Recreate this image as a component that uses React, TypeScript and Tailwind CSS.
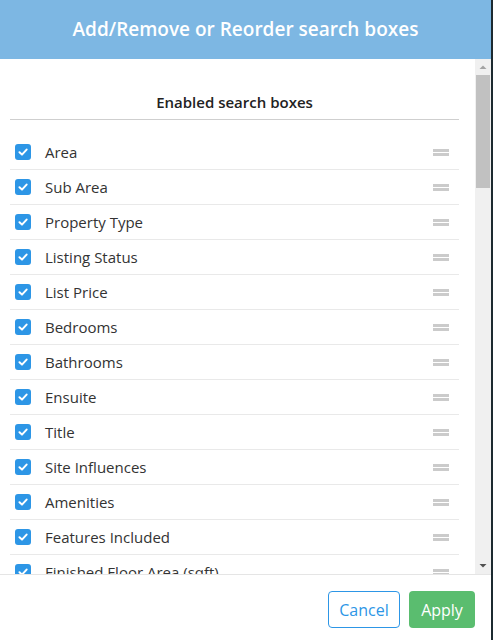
import React, { useState } from 'react';

const FIELDS = [
  'Area',
  'Sub Area',
  'Property Type',
  'Listing Status',
  'List Price',
  'Bedrooms',
  'Bathrooms',
  'Ensuite',
  'Title',
  'Site Influences',
  'Amenities',
  'Features Included',
  'Finished Floor Area (sqft)',
  'Year Built',
];

const CheckBox: React.FC<{ checked: boolean; onClick: () => void }> = ({ checked, onClick }) => (
  <button
    onClick={onClick}
    className={`w-4 h-4 rounded-[3px] flex items-center justify-center shrink-0 ${checked ? 'bg-[#2d96e6]' : 'bg-white border border-[#999]'}`}
  >
    {checked && (
      <svg width="10" height="10" viewBox="0 0 10 10">
        <path d="M1.5 5.2 L4 7.6 L8.6 2.6" fill="none" stroke="white" strokeWidth="2" strokeLinecap="round" strokeLinejoin="round" />
      </svg>
    )}
  </button>
);

export default function App() {
  const [enabled, setEnabled] = useState<Record<string, boolean>>(() =>
    Object.fromEntries(FIELDS.map(f => [f, true]))
  );

  return (
    <div className="flex h-[640px] w-[493px] overflow-hidden" style={{ fontFamily: '"Open Sans", "Noto Sans", sans-serif' }}>
      <div className="flex flex-col w-[491px] bg-white">
        <div className="h-[59px] bg-[#7db7e3] flex items-center justify-center shrink-0">
          <h1 className="text-white text-[19px] font-semibold">Add/Remove or Reorder search boxes</h1>
        </div>

        <div className="flex h-[515px] shrink-0">
          <div className="flex-1 overflow-hidden px-[10px] pt-[33px]">
            <div className="text-center text-[15px] font-semibold text-[#222] leading-[20px] pb-[7px] border-b border-[#cfcfcf] mr-[6px]">
              Enabled search boxes
            </div>
            <div className="mt-[15px] mr-[6px]">
              {FIELDS.map(f => (
                <div key={f} className="h-[35px] flex items-center border-b border-[#e9e9e9] pl-[5px] pr-[10px]">
                  <CheckBox checked={enabled[f]} onClick={() => setEnabled({ ...enabled, [f]: !enabled[f] })} />
                  <span className="ml-[14px] text-[15px] text-[#333] flex-1">{f}</span>
                  <div className="flex flex-col gap-[1px]">
                    <div className="w-4 h-[3px] bg-[#cbcbcb]" />
                    <div className="w-4 h-[3px] bg-[#cbcbcb]" />
                  </div>
                </div>
              ))}
            </div>
          </div>

          <div className="w-[16px] bg-[#f0f0f0] flex flex-col items-center">
            <svg width="16" height="16" viewBox="0 0 16 16" className="shrink-0">
              <path d="M4.5 10 L8 6.5 L11.5 10 Z" fill="#a3a3a3" />
            </svg>
            <div className="w-[14px] h-[113px] bg-[#c1c1c1]" />
            <div className="flex-1" />
            <svg width="16" height="16" viewBox="0 0 16 16" className="shrink-0">
              <path d="M4.5 6 L8 9.5 L11.5 6 Z" fill="#505050" />
            </svg>
          </div>
        </div>

        <div className="flex-1 border-t border-[#e5e5e5] flex items-start justify-end gap-[9px] pt-[16px] pr-[16px]">
          <button className="h-[37px] w-[72px] rounded-[4px] border border-[#2d96e6] text-[#2d96e6] text-[16px] bg-white">Cancel</button>
          <button className="h-[37px] w-[66px] rounded-[4px] bg-[#5abd6f] text-white text-[16px]">Apply</button>
        </div>
      </div>
      <div className="w-[2px] bg-[#1c2a30]" />
    </div>
  );
}
